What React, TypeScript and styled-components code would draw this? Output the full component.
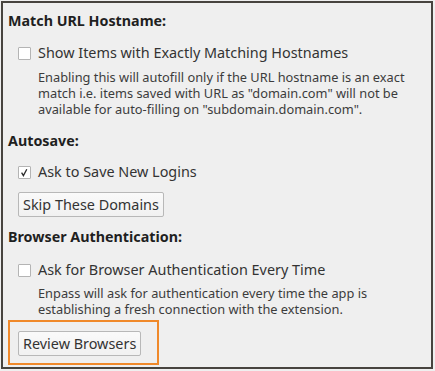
import React from 'react'
import styled, { createGlobalStyle } from 'styled-components'

const Global = createGlobalStyle`
    html, body {
        margin: 0;
        background: #efefef;
    }
    body {
        font-family: "Noto Sans", "DejaVu Sans", sans-serif;
        color: #3c3c3c;
    }
`

export default function App() {
    return (
        <>
            <Global />
            <Frame>
                <Heading>Match URL Hostname:</Heading>
                <Option checked={false} top={14}>Show Items with Exactly Matching Hostnames</Option>
                <Note>
                    Enabling this will autofill only if the URL hostname is an exact<br />
                    match i.e. items saved with URL as "domain.com" will not be<br />
                    available for auto-filling on "subdomain.domain.com".
                </Note>

                <Heading $top={15}>Autosave:</Heading>
                <Option checked top={13}>Ask to Save New Logins</Option>
                <Button $top={11}>Skip These Domains</Button>

                <Heading $top={11}>Browser Authentication:</Heading>
                <Option checked={false} top={15}>Ask for Browser Authentication Every Time</Option>
                <Note $top={6}>
                    Enpass will ask for authentication every time the app is<br />
                    establishing a fresh connection with the extension.
                </Note>

                <Focus>
                    <Button>Review Browsers</Button>
                </Focus>
            </Frame>
        </>
    )
}

const Option = (props: OptionProps) => (
    <Row $top={props.top}>
        <Box>
            {props.checked && (
                <svg width="9" height="9" viewBox="0 0 9 9">
                    <path d="M1.6 4.6 L3.4 7.6 L6.8 1.2" fill="none" stroke="#2b2b2b" strokeWidth="1.3" />
                </svg>
            )}
        </Box>
        <Label>{props.children}</Label>
    </Row>
)

const Frame = styled.div`
    box-sizing: border-box;
    margin: 1px 0 0 1px;
    width: 432px;
    height: 368px;
    border: 2px solid #47443f;
    padding: 9px 0 0 5px;
    display: flex;
    flex-direction: column;
    align-items: flex-start;
`

const Heading = styled.div<{ $top?: number }>`
    margin-top: ${p => p.$top ?? 0}px;
    font-size: 14.3px;
    line-height: 18px;
    font-weight: 700;
    color: #1f1f1f;
`

const Row = styled.div<{ $top: number }>`
    margin: ${p => p.$top}px 0 0 10px;
    display: flex;
    align-items: center;
    gap: 7px;
    height: 18px;
`

const Box = styled.span`
    box-sizing: border-box;
    width: 13px;
    height: 13px;
    background: #fff;
    border: 1px solid #b4b4b4;
    border-radius: 1px;
    display: flex;
    align-items: center;
    justify-content: center;
`

const Label = styled.span`
    font-size: 14.4px;
    line-height: 18px;
    color: #333;
`

const Note = styled.div<{ $top?: number }>`
    margin: ${p => p.$top ?? 7}px 0 0 30px;
    font-size: 12.8px;
    line-height: 16px;
    color: #3c3c3c;
`

const Button = styled.button<{ $top?: number }>`
    box-sizing: border-box;
    margin: ${p => p.$top ?? 0}px 0 0 10px;
    height: 25px;
    padding: 0 4px;
    font-family: inherit;
    font-size: 14.4px;
    color: #333;
    background: linear-gradient(#fafafa, #f1f1f1);
    border: 1px solid #b8b8b8;
    border-radius: 2px;
`

const Focus = styled.div`
    box-sizing: border-box;
    margin-top: 3px;
    width: 151px;
    height: 45px;
    border: 2px solid #f0892a;
    padding: 9px 0 0 8px;

    & > button {
        margin: 0;
    }
`

// Types
type OptionProps = {
    checked: boolean,
    top: number,
    children: React.ReactNode,
}
